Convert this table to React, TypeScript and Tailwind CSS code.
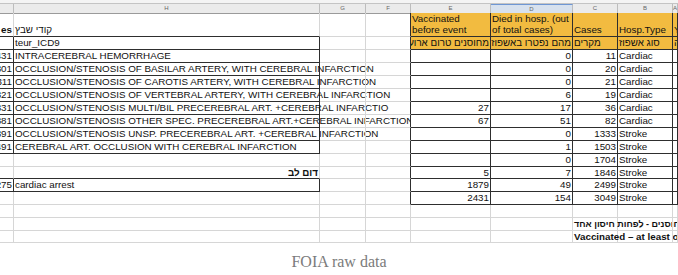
import React from "react";

type Cell = {
  t?: string;
  r?: boolean;
  b?: boolean;
  rtl?: boolean;
  wide?: boolean;
  clip?: boolean;
  top?: boolean;
  bottom?: boolean;
  lines?: string[];
  over?: boolean;
  small?: boolean;
};

const COL_LETTERS = ["", "H", "G", "F", "E", "D", "C", "B", "A"];

const E = (): Cell => ({});

const DATA: Cell[][] = [
  [
    { t: "es", r: true, b: true, clip: true, bottom: true },
    { t: "קודי שבץ", rtl: true, bottom: true },
    E(),
    E(),
    { lines: ["Vaccinated", "before event"], top: true, clip: true },
    { lines: ["Died in hosp. (out", "of total cases)"], top: true, clip: true },
    { t: "Cases", bottom: true },
    { t: "Hosp.Type", bottom: true, clip: true },
    { t: "Year", bottom: true, clip: true },
  ],
  [
    E(),
    { t: "teur_ICD9" },
    E(),
    E(),
    { t: "מחוסנים טרום ארוע", rtl: true, r: true, clip: true },
    { t: "מהם  נפטרו באשפוז", rtl: true, r: true, clip: true },
    { t: "מקרים", rtl: true },
    { t: "סוג אשפוז", rtl: true, clip: true },
    { t: "שנה", rtl: true, clip: true },
  ],
  [
    { t: "431", r: true, clip: true },
    { t: "INTRACEREBRAL HEMORRHAGE", wide: true },
    E(), E(), E(),
    { t: "0", r: true },
    { t: "11", r: true },
    { t: "Cardiac" },
    E(),
  ],
  [
    { t: "43301", r: true, clip: true },
    { t: "OCCLUSION/STENOSIS OF BASILAR ARTERY, WITH CEREBRAL INFARCTION", wide: true },
    E(), E(), E(),
    { t: "0", r: true },
    { t: "20", r: true },
    { t: "Cardiac" },
    E(),
  ],
  [
    { t: "43311", r: true, clip: true },
    { t: "OCCLUSION/STENOSIS OF CAROTIS ARTERY, WITH CEREBRAL INFARCTION", wide: true },
    E(), E(), E(),
    { t: "0", r: true },
    { t: "21", r: true },
    { t: "Cardiac" },
    E(),
  ],
  [
    { t: "43321", r: true, clip: true },
    { t: "OCCLUSION/STENOSIS OF VERTEBRAL ARTERY, WITH CEREBRAL INFARCTION", wide: true },
    E(), E(), E(),
    { t: "6", r: true },
    { t: "19", r: true },
    { t: "Cardiac" },
    E(),
  ],
  [
    { t: "43331", r: true, clip: true },
    { t: "OCCLUSION/STENOSIS MULTI/BIL PRECEREBRAL ART. +CEREBRAL INFARCTIO", wide: true },
    E(), E(),
    { t: "27", r: true },
    { t: "17", r: true },
    { t: "36", r: true },
    { t: "Cardiac" },
    E(),
  ],
  [
    { t: "43381", r: true, clip: true },
    { t: "OCCLUSION/STENOSIS OTHER SPEC. PRECEREBRAL ART.+CEREBRAL INFARCTION", wide: true },
    E(), E(),
    { t: "67", r: true },
    { t: "51", r: true },
    { t: "82", r: true },
    { t: "Cardiac" },
    E(),
  ],
  [
    { t: "43391", r: true, clip: true },
    { t: "OCCLUSION/STENOSIS UNSP. PRECEREBRAL ART. +CEREBRAL INFARCTION", wide: true },
    E(), E(), E(),
    { t: "0", r: true },
    { t: "1333", r: true },
    { t: "Stroke" },
    E(),
  ],
  [
    { t: "43491", r: true, clip: true },
    { t: "CEREBRAL ART. OCCLUSION WITH CEREBRAL INFARCTION", wide: true },
    E(), E(), E(),
    { t: "1", r: true },
    { t: "1503", r: true },
    { t: "Stroke" },
    E(),
  ],
  [E(), E(), E(), E(), E(), { t: "0", r: true }, { t: "1704", r: true }, { t: "Stroke" }, E()],
  [
    E(),
    { t: "דום לב", rtl: true, r: true, b: true },
    E(), E(),
    { t: "5", r: true },
    { t: "7", r: true },
    { t: "1846", r: true },
    { t: "Stroke" },
    E(),
  ],
  [
    { t: "4275", r: true, clip: true },
    { t: "cardiac arrest" },
    E(), E(),
    { t: "1879", r: true },
    { t: "49", r: true },
    { t: "2499", r: true },
    { t: "Stroke" },
    E(),
  ],
  [
    E(), E(), E(), E(),
    { t: "2431", r: true },
    { t: "154", r: true },
    { t: "3049", r: true },
    { t: "Stroke" },
    E(),
  ],
  [E(), E(), E(), E(), E(), E(), E(), E(), E()],
  [E(), E(), E(), E(), E(), E(), { t: "מחוסנים - לפחות חיסון אחד", rtl: true, b: true, over: true, small: true }, E(), E()],
  [E(), E(), E(), E(), E(), E(), { t: "Vaccinated – at least one dose", b: true, over: true }, E(), E()],
];

function boxed(r: number, c: number): boolean {
  if (c < 0 || c > 8) return false;
  if (c <= 1 && ((r >= 2 && r <= 10) || r === 13)) return true;
  if (c >= 4 && r >= 1 && r <= 14) return true;
  return false;
}

function CellView({ cell, r, c }: { cell: Cell; r: number; c: number }) {
  const thickR = boxed(r, c) || boxed(r, c + 1);
  const thickB = boxed(r, c) || boxed(r + 1, c);
  const yellow = c >= 4 && (r === 1 || r === 2);
  const cls = [
    "relative min-w-0 border-r border-b whitespace-nowrap",
    thickR ? "border-r-[#2e2e2e]" : "border-r-[#d6d6d6]",
    thickB ? "border-b-[#2e2e2e]" : "border-b-[#d6d6d6]",
    yellow ? "bg-[#f2bb40]" : "",
    cell.clip ? "overflow-hidden" : "overflow-visible",
  ].join(" ");

  let content: React.ReactNode = null;
  if (cell.lines) {
    content = (
      <div className="px-[1px] leading-[11px]">
        {cell.lines.map((l, i) => (
          <div key={i}>{l}</div>
        ))}
      </div>
    );
  } else if (cell.t) {
    const inner = (
      <span
        dir={cell.rtl ? "rtl" : undefined}
        className={(cell.b ? "font-bold " : "") + (cell.small ? "text-[9px] " : "") + "shrink-0"}
      >
        {cell.t}
      </span>
    );
    if (cell.wide) {
      content = (
        <div className="block w-[396px] overflow-hidden pl-[1px] leading-[12px]">{inner}</div>
      );
    } else {
      content = (
        <div
          className={
            "flex h-full px-[1px] leading-[12px] " +
            (cell.r ? "justify-end " : "justify-start ") +
            (cell.bottom ? "items-end" : "items-start")
          }
        >
          {inner}
        </div>
      );
    }
  }
  return <div className={cls}>{content}</div>;
}

export default function App() {
  return (
    <div
      className="w-[678px] h-[275px] overflow-hidden bg-white text-[#111]"
      style={{ fontFamily: '"Liberation Sans", Arial, "DejaVu Sans", sans-serif' }}
    >
      <div className="h-[4px] bg-[#f4f4f4] border-b border-b-[#c4c4c4]" />
      <div className="grid grid-cols-[14px_306px_46px_45px_80px_82px_45px_55px_5px] h-[9px] text-[6px] leading-[8px] text-[#666]">
        {COL_LETTERS.map((l, i) => (
          <div
            key={i}
            className={
              "flex justify-center border-r border-b border-r-[#bdbdbd] border-b-[#9a9a9a] " +
              (l === "D" ? "bg-[#d7e1ee] border-t border-t-[#6f97d4]" : "bg-[#ebebeb]")
            }
          >
            {l}
          </div>
        ))}
      </div>
      <div className="grid grid-cols-[14px_306px_46px_45px_80px_82px_45px_55px_5px] grid-rows-[24px_13px_13px_13px_13px_13px_13px_13px_13px_13px_13px_12px_13px_13px_13px_13px_12px] text-[9.8px]">
        {DATA.map((row, ri) =>
          row.map((cell, ci) => <CellView key={ri + "-" + ci} cell={cell} r={ri + 1} c={ci} />)
        )}
      </div>
      <div
        className="flex justify-center pt-[9px] text-[16px] leading-[20px] text-[#7b7b7b]"
        style={{ fontFamily: '"Liberation Serif", "Times New Roman", serif' }}
      >
        FOIA raw data
      </div>
    </div>
  );
}
